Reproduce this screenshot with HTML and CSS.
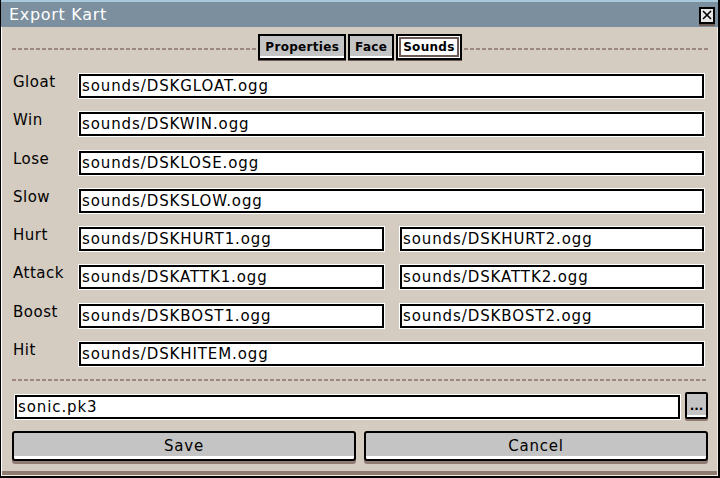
FILE: index.html
```html
<!DOCTYPE html>
<html>
<head>
<meta charset="utf-8">
<link rel="stylesheet" href="styles.css">
</head>
<body>
<div class="window">
  <div class="titlebar">
    <span class="title">Export Kart</span>
    <span class="close"><svg width="10" height="10" viewBox="0 0 10 10"><path d="M1 1L9 9M9 1L1 9" stroke="#000" stroke-width="1.6"/></svg></span>
  </div>
  <div class="body">
    <div class="tabrow">
      <div class="dash"></div>
      <div class="tabs">
        <span class="tab">Properties</span>
        <span class="tab">Face</span>
        <span class="tab active"><span class="tab-inner">Sounds</span></span>
      </div>
      <div class="dash"></div>
    </div>
    <div class="form">
      <span class="label">Gloat</span><div class="field full">sounds/DSKGLOAT.ogg</div>
      <span class="label">Win</span><div class="field full">sounds/DSKWIN.ogg</div>
      <span class="label">Lose</span><div class="field full">sounds/DSKLOSE.ogg</div>
      <span class="label">Slow</span><div class="field full">sounds/DSKSLOW.ogg</div>
      <span class="label">Hurt</span><div class="field">sounds/DSKHURT1.ogg</div><div class="field">sounds/DSKHURT2.ogg</div>
      <span class="label">Attack</span><div class="field">sounds/DSKATTK1.ogg</div><div class="field">sounds/DSKATTK2.ogg</div>
      <span class="label">Boost</span><div class="field">sounds/DSKBOST1.ogg</div><div class="field">sounds/DSKBOST2.ogg</div>
      <span class="label">Hit</span><div class="field full">sounds/DSKHITEM.ogg</div>
    </div>
    <div class="dash bottomdash"></div>
    <div class="filerow">
      <div class="field file">sonic.pk3</div>
      <span class="browse">...</span>
    </div>
    <div class="buttons">
      <span class="btn">Save</span>
      <span class="btn">Cancel</span>
    </div>
  </div>
</div>
</body>
</html>
```
FILE: styles.css
```css
html, body {
  margin: 0;
  padding: 0;
  background: #000;
}
.window {
  width: 720px;
  height: 478px;
  box-sizing: border-box;
  display: flex;
  flex-direction: column;
  background: #d4ccc0;
  border-left: 1px solid #000;
  border-right: 2px solid #000;
  border-bottom: 2px solid #000;
  font-family: "DejaVu Sans", sans-serif;
  color: #000;
}
.titlebar {
  height: 27px;
  box-sizing: border-box;
  background: #7b8f9e;
  border-top: 2px solid #a6c9dc;
  display: flex;
  align-items: center;
  justify-content: space-between;
  padding: 0 3px 0 8px;
}
.title {
  color: #fff;
  font-size: 16px;
  letter-spacing: 0.7px;
}
.close {
  width: 12px;
  height: 13px;
  background: #e8e8e8;
  border: 2px solid #000;
  box-shadow: 0 2px 0 #6e5a55;
  display: flex;
  align-items: center;
  justify-content: center;
  margin-top: 1px;
}
.body {
  flex: 1;
  display: flex;
  flex-direction: column;
  padding: 0 9px 0 10px;
  border-left: 1px solid #fff;
  border-right: 1px solid #efeae4;
  border-bottom: 1px solid #efeae4;
  box-shadow: inset 0 -4px 0 #8e7b72;
}
.tabrow {
  display: flex;
  align-items: center;
  gap: 2px;
  margin-top: 7px;
  height: 26px;
}
.dash {
  flex: 1;
  height: 2px;
  margin-top: 4px;
  background: repeating-linear-gradient(to right, #9c887e 0 4px, transparent 4px 6px);
}
.tabs {
  display: flex;
  gap: 2px;
}
.tab {
  height: 26px;
  box-sizing: border-box;
  padding: 0 5px;
  background: #c4c4c4;
  border: 2px solid #000;
  box-shadow: inset 0 -2px 0 #fff, 0 1px 0 #6e5a55;
  font-size: 12px;
  font-weight: bold;
  display: flex;
  align-items: center;
  letter-spacing: 0.3px;
}
.tab.active {
  background: #fff;
  padding: 1px;
  box-shadow: 0 1px 0 #6e5a55;
}
.tab-inner {
  border: 2px solid #6e5a55;
  padding: 0 2px;
  height: 100%;
  box-sizing: border-box;
  display: flex;
  align-items: center;
}
.form {
  display: grid;
  grid-template-columns: 50px 305px 304px;
  column-gap: 16px;
  row-gap: 14.3px;
  margin-top: 14px;
  padding-left: 1px;
}
.label {
  grid-column: 1;
  font-size: 15px;
  letter-spacing: 0.5px;
  line-height: 16px;
  white-space: nowrap;
}
.field {
  height: 24px;
  box-sizing: border-box;
  background: #fff;
  border: 2px solid #000;
  box-shadow: 0 0 0 1px #fff;
  font-size: 15px;
  letter-spacing: 0.9px;
  padding: 0 1px;
  display: flex;
  align-items: center;
  white-space: nowrap;
  overflow: hidden;
}
.field.full {
  grid-column: 2 / 4;
}
.bottomdash {
  flex: none;
  margin-top: 13px;
}
.filerow {
  display: flex;
  gap: 5px;
  align-items: flex-start;
  margin-top: 11px;
  padding-left: 3px;
}
.field.file {
  flex: 1;
  margin-top: 3px;
}
.browse {
  width: 23px;
  height: 27px;
  box-sizing: border-box;
  background: #c4c4c4;
  border: 2px solid #000;
  border-radius: 2px;
  box-shadow: inset 0 -2px 0 #fff, 0 2px 0 #8e7b72;
  font-size: 12px;
  font-weight: bold;
  display: flex;
  align-items: center;
  justify-content: center;
}
.buttons {
  display: flex;
  gap: 8px;
  margin-top: 12px;
}
.btn {
  flex: 1;
  height: 30px;
  box-sizing: border-box;
  background: #c4c4c4;
  border: 2px solid #000;
  border-radius: 3px;
  box-shadow: inset 0 -3px 0 #fff, 0 3px 0 #8e7b72;
  font-size: 15px;
  display: flex;
  align-items: center;
  justify-content: center;
  letter-spacing: 0.8px;
}
```
